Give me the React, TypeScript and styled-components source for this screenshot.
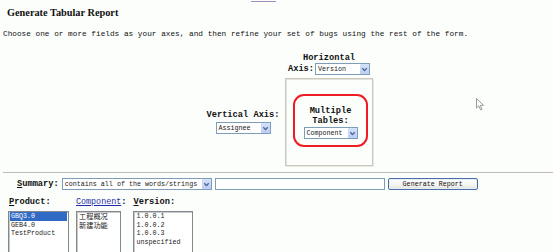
import React from "react";
import styled, { createGlobalStyle } from "styled-components";

const GlobalStyle = createGlobalStyle`
  html, body {
    margin: 0;
    padding: 0;
    background: #fcfefc;
  }
`;

const MONO = `"Liberation Mono", "DejaVu Sans Mono", monospace`;

const Page = styled.div`
  position: relative;
  width: 553px;
  height: 252px;
  overflow: hidden;
  background: #fcfefc;
  color: #111;
  font-family: ${MONO};
`;

const TopLinkRule = styled.div`
  margin: 1px 0 0 251px;
  width: 25px;
  height: 1px;
  background: #a48cbc;
`;

const Heading = styled.h2`
  margin: 5px 0 0 7px;
  font: bold 10.3px/12px "Liberation Serif", serif;
  color: #111;
`;

const Intro = styled.p`
  margin: 11px 0 0 3px;
  font: 7.75px/9px ${MONO};
  white-space: nowrap;
`;

const AxesGrid = styled.div`
  display: grid;
  grid-template-columns: 79px 88px;
  grid-template-rows: 25px 88px;
  margin: 14px 0 0 206px;
  width: max-content;
`;

const HorizontalCell = styled.div`
  grid-column: 2;
  grid-row: 1;
  display: flex;
  flex-direction: column;
  align-items: center;
  justify-content: flex-start;
`;

const VerticalCell = styled.div`
  grid-column: 1;
  grid-row: 2;
  display: flex;
  flex-direction: column;
  align-items: center;
  justify-content: center;
  padding-right: 5px;
  gap: 2px;
`;

const BoxedCell = styled.div`
  grid-column: 2;
  grid-row: 2;
  height: 88px;
  box-sizing: border-box;
  border: 1px solid #c8c8c0;
  box-shadow: inset 1px 1px 0 #e4e4dc, 1px 1px 0 #e8e8e0;
  padding: 15px 4px 0 7px;
  display: flex;
  align-items: flex-start;
`;

const Highlight = styled.div`
  flex: 1;
  height: 53px;
  box-sizing: border-box;
  border: 2px solid #ee1c24;
  border-radius: 11px;
  display: flex;
  flex-direction: column;
  align-items: center;
  padding-top: 10px;
`;

const Label = styled.span`
  font: bold 8.7px/10px ${MONO};
  white-space: nowrap;
`;

const LabelLine = styled.div`
  display: flex;
  align-items: center;
  gap: 1px;
`;

const SelectBox = styled.div<{ $w: number; $gapTop?: number }>`
  display: inline-flex;
  align-items: center;
  box-sizing: border-box;
  width: ${(p) => p.$w}px;
  height: 12px;
  margin-top: ${(p) => p.$gapTop ?? 0}px;
  border: 1px solid #7f9db9;
  background: #fff;
  font: 6.7px/10px ${MONO};
  color: #222;
  text-align: left;
`;

const SelectText = styled.span`
  flex: 1;
  padding-left: 2px;
  white-space: nowrap;
  overflow: hidden;
`;

const SelectButton = styled.span`
  display: flex;
  align-items: center;
  justify-content: center;
  width: 9px;
  height: 10px;
  background: linear-gradient(#d6e2fc, #b9cdf6);
  border-radius: 1px;
`;

const Select = ({
  value,
  width,
  gapTop
}: {
  value: string;
  width: number;
  gapTop?: number;
}) => (
  <SelectBox $w={width} $gapTop={gapTop}>
    <SelectText>{value}</SelectText>
    <SelectButton>
      <svg width="7" height="7" viewBox="0 0 7 7">
        <path d="M1.3 2.2 L3.5 4.6 L5.7 2.2" fill="none" stroke="#4d6185" strokeWidth="1.3" />
      </svg>
    </SelectButton>
  </SelectBox>
);

const Rule = styled.div`
  margin: 6px 0 0 3px;
  height: 1px;
  background: #bcbcb4;
`;

const SummaryRow = styled.div`
  display: flex;
  align-items: center;
  margin: 5px 0 0 17px;
  gap: 3px;
`;

const TextInput = styled.div`
  box-sizing: border-box;
  width: 170px;
  height: 12px;
  border: 1px solid #7f9db9;
  background: #fff;
`;

const Button = styled.div`
  box-sizing: border-box;
  width: 90px;
  height: 12px;
  border: 1px solid #4a6ea8;
  border-radius: 2px;
  background: linear-gradient(#ffffff, #f2f2ee 70%, #dcdad0);
  box-shadow: inset 0 0 0 1px #e8eef8;
  font: 6.7px/10px ${MONO};
  text-align: center;
  color: #111;
`;

const FieldsRow = styled.div`
  display: flex;
  gap: 7px;
  margin: 7px 0 0 8px;
`;

const FieldColumn = styled.div`
  display: flex;
  flex-direction: column;
  align-items: flex-start;
  gap: 4px;
`;

const FieldLabel = styled.span<{ $pad?: number }>`
  font: bold 8.7px/10px ${MONO};
  padding-left: ${(p) => p.$pad ?? 0}px;
  white-space: nowrap;
`;

const FieldLink = styled.a`
  font-weight: normal;
  font-size: 8.4px;
  color: #1f2fa8;
  text-decoration: underline;
`;

const ListBox = styled.div<{ $w: number }>`
  box-sizing: border-box;
  width: ${(p) => p.$w}px;
  height: 50px;
  border: 1px solid #828790;
  box-shadow: inset 1px 1px 0 #c8c8c8;
  background: #fff;
  padding: 0 1px;
`;

const Option = styled.div<{ $selected?: boolean }>`
  height: 8.7px;
  padding-left: 1px;
  white-space: nowrap;
  font: 6.7px/8.7px ${MONO};
  background: ${(p) => (p.$selected ? "#316ac5" : "transparent")};
  color: ${(p) => (p.$selected ? "#fff" : "#222")};
`;

const CjkOption = styled.div`
  height: 9px;
  overflow: hidden;
  padding-left: 1px;
  white-space: nowrap;
  font: 7.2px/9px "Noto Sans CJK SC", "Liberation Sans", sans-serif;
  color: #222;
`;

const Cursor = styled.svg`
  position: absolute;
  left: 476px;
  top: 98px;
`;

const App = () => (
  <>
    <GlobalStyle />
    <Page>
      <TopLinkRule />
      <Heading>Generate Tabular Report</Heading>
      <Intro>
        Choose one or more fields as your axes, and then refine your set of bugs using the
        rest of the form.
      </Intro>

      <AxesGrid>
        <HorizontalCell>
          <Label>Horizontal</Label>
          <LabelLine>
            <Label>Axis:</Label>
            <Select value="Version" width={55} />
          </LabelLine>
        </HorizontalCell>
        <VerticalCell>
          <Label>Vertical Axis:</Label>
          <Select value="Assignee" width={55} />
        </VerticalCell>
        <BoxedCell>
          <Highlight>
            <Label>Multiple</Label>
            <Label>Tables:</Label>
            <Select value="Component" width={54} gapTop={1} />
          </Highlight>
        </BoxedCell>
      </AxesGrid>

      <Rule />

      <SummaryRow>
        <FieldLabel>
          <u>S</u>ummary:
        </FieldLabel>
        <Select value="contains all of the words/strings" width={150} />
        <TextInput />
        <Button>Generate Report</Button>
      </SummaryRow>

      <FieldsRow>
        <FieldColumn>
          <FieldLabel $pad={1}>
            <u>P</u>roduct:
          </FieldLabel>
          <ListBox $w={61}>
            <Option $selected>GBQ3.0</Option>
            <Option>GEB4.0</Option>
            <Option>TestProduct</Option>
          </ListBox>
        </FieldColumn>
        <FieldColumn>
          <FieldLabel>
            <FieldLink href="#">Component</FieldLink>:
          </FieldLabel>
          <ListBox $w={45}>
            <CjkOption>工程概况</CjkOption>
            <CjkOption>新建功能</CjkOption>
          </ListBox>
        </FieldColumn>
        <FieldColumn>
          <FieldLabel>
            <u>V</u>ersion:
          </FieldLabel>
          <ListBox $w={60}>
            <Option>1.0.0.1</Option>
            <Option>1.0.0.2</Option>
            <Option>1.0.0.3</Option>
            <Option>unspecified</Option>
          </ListBox>
        </FieldColumn>
      </FieldsRow>

      <Cursor width="9" height="13" viewBox="0 0 9 13">
        <path d="M0.5 0.5 L0.5 10 L2.8 7.8 L4.6 11.8 L6 11.2 L4.3 7.3 L7.5 7.3 Z" fill="#fff" stroke="#9a9a9a" strokeWidth="1" />
      </Cursor>
    </Page>
  </>
);

export default App;
